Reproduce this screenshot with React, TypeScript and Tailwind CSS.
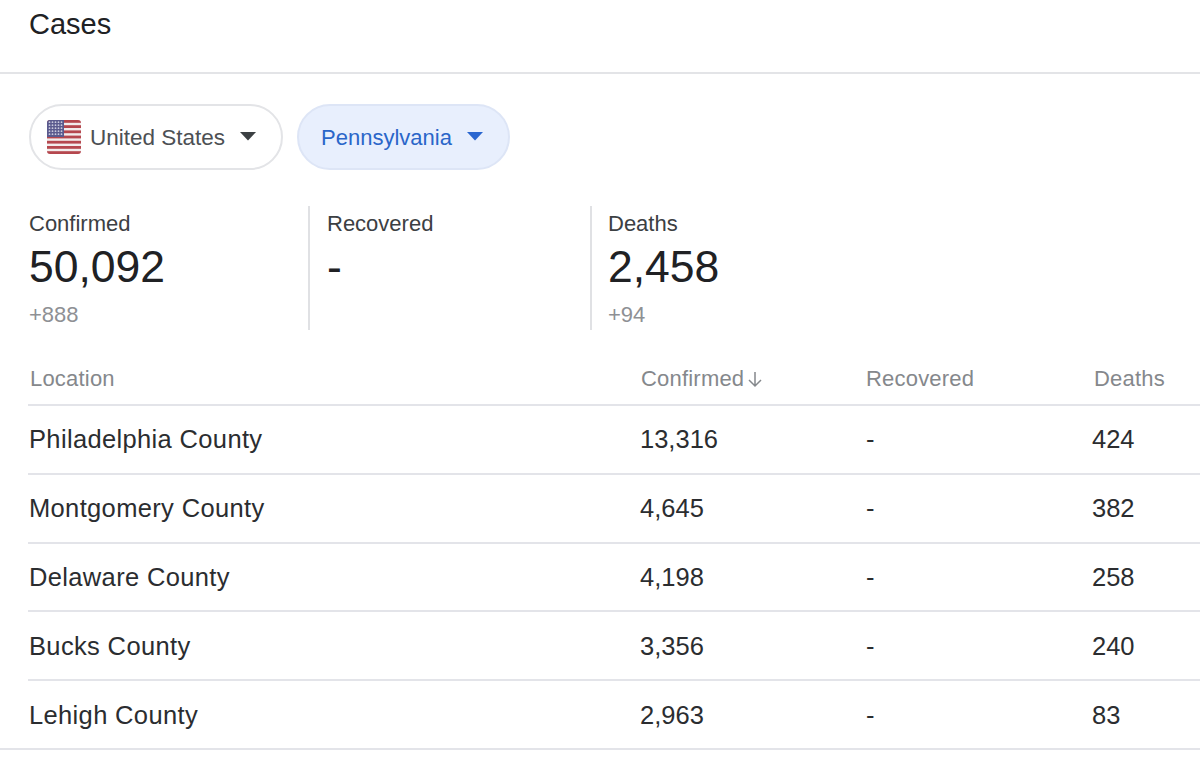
const rows = [
  ["Philadelphia County", "13,316", "-", "424"],
  ["Montgomery County", "4,645", "-", "382"],
  ["Delaware County", "4,198", "-", "258"],
  ["Bucks County", "3,356", "-", "240"],
  ["Lehigh County", "2,963", "-", "83"],
];

function Flag() {
  return (
    <svg width="34" height="34" viewBox="0 0 34 34" className="shrink-0">
      <defs>
        <clipPath id="flagclip"><rect x="0" y="0" width="34" height="34" rx="3" /></clipPath>
      </defs>
      <g clipPath="url(#flagclip)">
        <rect width="34" height="34" fill="#f2ecec" />
        {[0, 5.2, 10.4, 15.6, 20.8, 26, 31.2].map((y) => (
          <rect key={y} x="0" y={y} width="34" height="2.8" fill="#b5474e" />
        ))}
        <rect width="17" height="17" fill="#5a5a8e" />
        {[2.2, 5.2, 8.2, 11.2, 14.2].map((y) =>
          [2.2, 5.2, 8.2, 11.2, 14.2].map((x) => <circle key={`${x}-${y}`} cx={x + 0.3} cy={y} r="0.9" fill="#c9c9dd" />)
        )}
      </g>
    </svg>
  );
}

function Caret({ color }: { color: string }) {
  return (
    <svg width="16" height="9" viewBox="0 0 16 9" className="shrink-0">
      <path d="M0 0H16L8 8.5Z" fill={color} />
    </svg>
  );
}

function Stat({ label, value, delta, cls }: { label: string; value: string; delta?: string; cls: string }) {
  return (
    <div className={cls}>
      <div className="pt-[1px] text-[22px] leading-[34px] text-[#3c4043]">{label}</div>
      <div className="-mt-[1px] text-[44.5px] leading-[54px] text-[#202124]">{value}</div>
      <div className="mt-[9px] h-[24px] text-[22px] leading-[24px] text-[#8e9094]">{delta}</div>
    </div>
  );
}

export default function App() {
  return (
    <div className="w-[1200px] h-[767px] overflow-hidden bg-white font-['Liberation_Sans',Arial,sans-serif]">
      <div className="h-[74px] border-b-2 border-[#e3e4e7] pl-[29px] pt-[7px] text-[29px] leading-[34px] text-[#202124]">Cases</div>
      <div className="flex gap-[14px] pl-[29px] pt-[30px]">
        <div className="flex h-[66px] w-[254px] items-center rounded-full border-2 border-[#e3e4e7] pl-[16px] text-[22.5px] text-[#4d5054]">
          <Flag />
          <span className="ml-[9px] mt-[1px]">United States</span>
          <span className="ml-[15px] -mt-[2px]"><Caret color="#3c4043" /></span>
        </div>
        <div className="flex h-[66px] w-[213px] items-center rounded-full border-2 border-[#dde5f6] bg-[#e8effd] pl-[22px] text-[22px] text-[#2a66c9]">
          <span>Pennsylvania</span>
          <span className="ml-[15px] -mt-[2px]"><Caret color="#2a66d0" /></span>
        </div>
      </div>
      <div className="flex pt-[36px]">
        <Stat label="Confirmed" value="50,092" delta="+888" cls="h-[124px] w-[310px] border-r-2 border-[#e0e1e4] pl-[29px]" />
        <Stat label="Recovered" value="-" cls="h-[124px] w-[282px] border-r-2 border-[#e0e1e4] pl-[17px]" />
        <Stat label="Deaths" value="2,458" delta="+94" cls="h-[124px] pl-[16px]" />
      </div>
      <div className="ml-[28px]">
        <div className="grid h-[76px] grid-cols-[613px_225px_228px_1fr] items-center border-b-2 border-[#e3e4e9] pt-[23px] pl-[2px] text-[22px] tracking-[0.2px] text-[#85888c]">
          <div>Location</div>
          <div className="-ml-[2px] flex items-center">
            Confirmed
            <svg width="16" height="18" viewBox="0 0 16 18" fill="none" stroke="#85888c" strokeWidth="1.5" className="ml-[3px]">
              <path d="M8 2V16M2 10L8 16L14 10" />
            </svg>
          </div>
          <div className="-ml-[2px]">Recovered</div>
          <div className="-ml-[2px]">Deaths</div>
        </div>
        {rows.map((r, i) => (
          <div
            key={r[0]}
            className={
              i === rows.length - 1
                ? "-ml-[28px] grid h-[69px] grid-cols-[640px_226px_226px_1fr] items-center border-b-2 border-[#e3e4e9] pl-[29px] text-[25.5px] text-[#2b2d30]"
                : "-ml-[28px] grid h-[68.8px] grid-cols-[640px_226px_226px_1fr] items-center pb-[2px] pl-[29px] text-[25.5px] text-[#2b2d30] relative"
            }
          >
            <div className="-ml-[29px] pl-[29px] tracking-[0.35px]">{r[0]}</div>
            <div className="-ml-[29px]">{r[1]}</div>
            <div className="-ml-[29px]">{r[2]}</div>
            <div className="-ml-[29px]">{r[3]}</div>
            {i !== rows.length - 1 && <div className="absolute bottom-0 left-[28px] right-0 h-[2px] bg-[#e3e4e9]" />}
          </div>
        ))}
      </div>
    </div>
  );
}
